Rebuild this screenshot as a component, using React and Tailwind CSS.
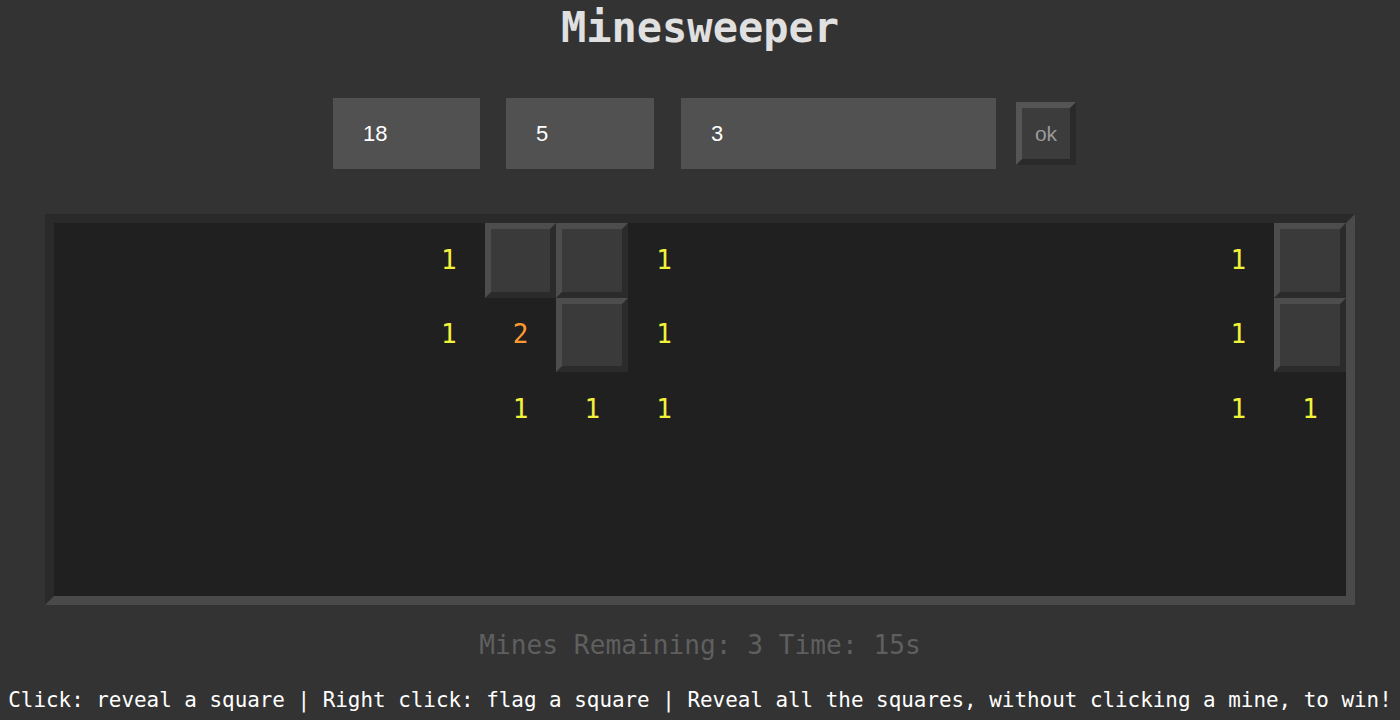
const COLS = 18;
const ROWS = 5;

// '#' = covered, digit = revealed number, '' = revealed empty
const BOARD = [
  ['', '', '', '', '', '1', '#', '#', '1', '', '', '', '', '', '', '', '1', '#'],
  ['', '', '', '', '', '1', '2', '#', '1', '', '', '', '', '', '', '', '1', '#'],
  ['', '', '', '', '', '', '1', '1', '1', '', '', '', '', '', '', '', '1', '1'],
  ['', '', '', '', '', '', '', '', '', '', '', '', '', '', '', '', '', ''],
  ['', '', '', '', '', '', '', '', '', '', '', '', '', '', '', '', '', ''],
];

const NUM_COLORS = {
  '1': 'text-[#f2f23a]',
  '2': 'text-[#ff9a30]',
  '3': 'text-[#ff5a3a]',
};

const mono = { fontFamily: '"DejaVu Sans Mono", "Liberation Mono", monospace' };
const sans = { fontFamily: '"Liberation Sans", Arial, sans-serif' };

function Cell({ v }) {
  if (v === '#') {
    return (
      <div className="border-[6px] border-t-[#4d4d4d] border-l-[#4d4d4d] border-b-[#2b2b2b] border-r-[#2b2b2b] bg-[#3a3a3a]" />
    );
  }
  return (
    <div
      className={`flex items-center justify-center text-[26px] ${NUM_COLORS[v] || ''}`}
      style={mono}
    >
      {v}
    </div>
  );
}

export default function App() {
  return (
    <div className="min-h-screen w-full bg-[#333333] flex flex-col items-center overflow-hidden">
      <h1
        className="pt-[4px] text-[42px] leading-[48px] font-bold text-[#e0e0e0]"
        style={mono}
      >
        Minesweeper
      </h1>

      <div className="mt-[46px] flex items-center pl-[9px]" style={sans}>
        <input
          defaultValue="18"
          className="w-[147px] h-[71px] bg-[#515151] text-white text-[22px] pl-[30px] outline-none"
        />
        <input
          defaultValue="5"
          className="ml-[26px] w-[148px] h-[71px] bg-[#515151] text-white text-[22px] pl-[30px] outline-none"
        />
        <input
          defaultValue="3"
          className="ml-[27px] w-[315px] h-[71px] bg-[#515151] text-white text-[22px] pl-[30px] outline-none"
        />
        <button className="ml-[20px] w-[60px] h-[63px] border-[6px] border-t-[#555555] border-l-[#555555] border-b-[#2a2a2a] border-r-[#2a2a2a] bg-[#3c3c3c] text-[#9a9a9a] text-[21px]">
          ok
        </button>
      </div>

      <div className="mt-[45px] w-[1310px] border-[9px] border-t-[#2a2a2a] border-l-[#2a2a2a] border-b-[#4a4a4a] border-r-[#4a4a4a] bg-[#202020]">
        <div
          className="grid h-[373px]"
          style={{
            gridTemplateColumns: `repeat(${COLS}, 1fr)`,
            gridTemplateRows: `repeat(${ROWS}, 1fr)`,
          }}
        >
          {BOARD.flatMap((row, r) => row.map((v, c) => <Cell key={`${r}-${c}`} v={v} />))}
        </div>
      </div>

      <div className="mt-[25px] text-[26.2px] leading-[30px] text-[#5f5f5f]" style={mono}>
        Mines Remaining: 3 Time: 15s
      </div>

      <div className="mt-[28px] text-[20.9px] leading-[25px] text-white whitespace-nowrap" style={mono}>
        Click: reveal a square | Right click: flag a square | Reveal all the squares, without clicking a mine, to win!
      </div>
    </div>
  );
}
